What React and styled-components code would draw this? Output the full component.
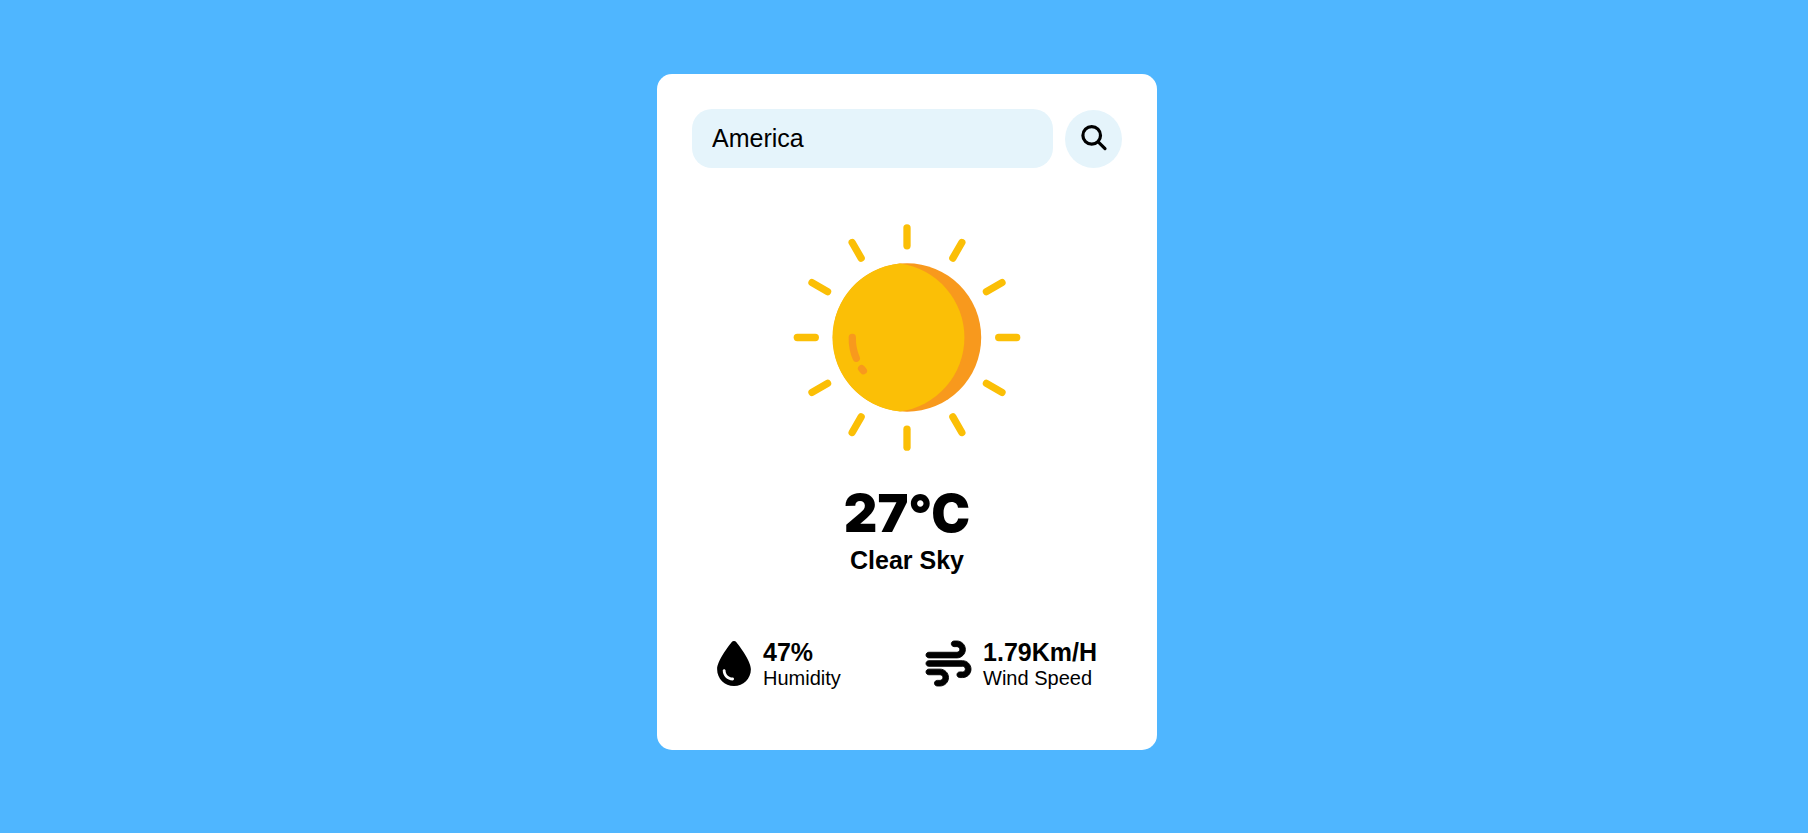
import React, { useState } from "react";
import styled, { createGlobalStyle } from "styled-components";
import { FaDroplet, FaWind } from "react-icons/fa6";

const GlobalStyle = createGlobalStyle`
  * {
    box-sizing: border-box;
  }
  body {
    margin: 0;
    background: #4fb6ff;
    color: #000;
    font-family: "Liberation Sans", Arial, sans-serif;
  }
`;

const Page = styled.main`
  min-height: 100vh;
  display: flex;
  align-items: center;
  justify-content: center;
  padding: 0 0 9px 6px;
`;

const Card = styled.section`
  width: 100%;
  max-width: 500px;
  padding: 35px 35px 60px;
  background: #fff;
  border-radius: 15px;
`;

const SearchBar = styled.form`
  display: flex;
  align-items: flex-end;
  gap: 12px;
`;

const SearchInput = styled.input`
  flex: 1;
  min-width: 0;
  height: 59px;
  padding: 0 20px;
  border: 0;
  outline: 0;
  border-radius: 20px;
  background: #e5f4fb;
  color: inherit;
  font: inherit;
  font-size: 25px;
`;

const SearchButton = styled.button`
  display: flex;
  align-items: center;
  justify-content: center;
  width: 57px;
  height: 58px;
  padding: 0;
  border: 0;
  border-radius: 50%;
  background: #e5f4fb;
  color: inherit;
  cursor: pointer;
`;

const Weather = styled.div`
  display: flex;
  flex-direction: column;
  align-items: center;
  padding-top: 55px;
`;

const SunImage = styled.svg`
  width: 228px;
  height: 228px;
  margin-bottom: 33px;
`;

const Temperature = styled.h1`
  margin: 0 0 2px;
  font-family: "Arial Black", Inter, sans-serif;
  font-size: 52px;
  font-weight: 900;
  line-height: 60px;
`;

const Condition = styled.p`
  margin: 0;
  font-size: 25px;
  font-weight: 700;
`;

const Details = styled.div`
  display: flex;
  justify-content: space-between;
  padding: 63px 25px 0;
`;

const Detail = styled.div`
  display: flex;
  align-items: center;
  gap: 12px;

  svg {
    width: ${({ $iconWidth }) => $iconWidth}px;
    height: 45px;
    margin-bottom: 2px;
    overflow: visible;
  }
`;

const WindIcon = styled(FaWind)`
  stroke: currentColor;
  stroke-width: 10px;
`;

const DetailText = styled.div`
  display: flex;
  flex-direction: column;
`;

const Value = styled.strong`
  font-size: 25px;
`;

const Label = styled.span`
  font-size: 20px;
`;

const rays = Array.from({ length: 12 }, (_, i) => i * 30);

function Sun() {
  return (
    <SunImage viewBox="-114 -114.5 228 228" role="img" aria-label="Sun">
      <g stroke="#fbbf06" strokeWidth="7.3" strokeLinecap="round">
        {rays.map((angle) => (
          <line key={angle} y1="-91.7" y2="-109.7" transform={`rotate(${angle})`} />
        ))}
      </g>
      <circle r="74.2" fill="#f8991d" />
      <path
        d="M-7 -73.9A74.2 74.2 0 0 0 -7 73.9A74.6 74.6 0 0 0 -7 -73.9Z"
        fill="#fbbf06"
      />
      <g fill="none" stroke="#f8991d" strokeWidth="7.3" strokeLinecap="round">
        <path d="M-54.7 0Q-55 11 -50.7 20.8" />
        <path d="M-45.4 31L-43.6 33.2" />
      </g>
    </SunImage>
  );
}

function SearchIcon() {
  return (
    <svg
      width="32"
      height="32"
      viewBox="0 0 32 32"
      fill="none"
      stroke="currentColor"
      strokeWidth="3.2"
      strokeLinecap="round"
      aria-hidden="true"
    >
      <circle cx="13.7" cy="12.4" r="8.8" />
      <path d="M20.2 18.9L27 25.6" />
    </svg>
  );
}

export default function App() {
  const [city, setCity] = useState("America");

  return (
    <>
      <GlobalStyle />
      <Page>
        <Card>
          <SearchBar onSubmit={(event) => event.preventDefault()}>
            <SearchInput
              type="text"
              aria-label="Location"
              value={city}
              onChange={(event) => setCity(event.target.value)}
            />
            <SearchButton type="submit" aria-label="Search">
              <SearchIcon />
            </SearchButton>
          </SearchBar>
          <Weather>
            <Sun />
            <Temperature>27°C</Temperature>
            <Condition>Clear Sky</Condition>
          </Weather>
          <Details>
            <Detail $iconWidth={34}>
              <FaDroplet />
              <DetailText>
                <Value>47%</Value>
                <Label>Humidity</Label>
              </DetailText>
            </Detail>
            <Detail $iconWidth={45}>
              <WindIcon />
              <DetailText>
                <Value>1.79Km/H</Value>
                <Label>Wind Speed</Label>
              </DetailText>
            </Detail>
          </Details>
        </Card>
      </Page>
    </>
  );
}
